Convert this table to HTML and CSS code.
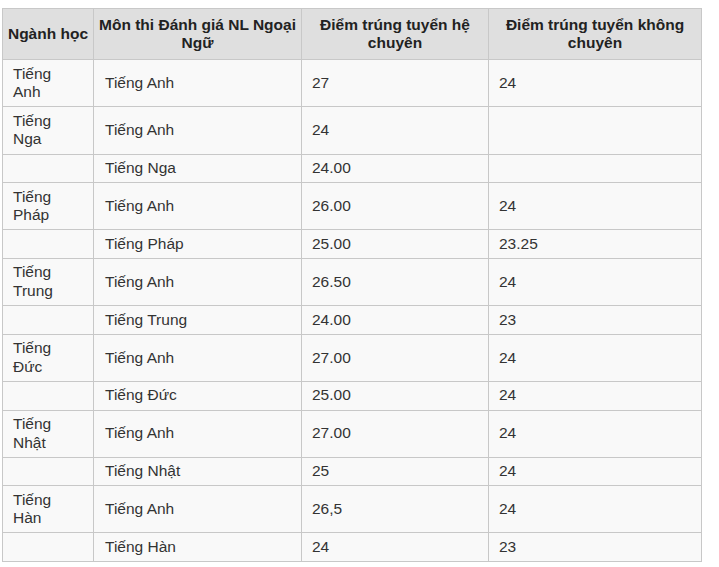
FILE: index.html
```html
<!DOCTYPE html>
<html lang="vi">
<head>
<meta charset="utf-8">
<title>Điểm trúng tuyển</title>
<link rel="stylesheet" href="styles.css">
</head>
<body>
<table class="scores">
  <colgroup>
    <col class="c1"><col class="c2"><col class="c3"><col class="c4">
  </colgroup>
  <thead>
    <tr>
      <th>Ngành học</th>
      <th>Môn thi Đánh giá NL Ngoại<br>Ngữ</th>
      <th>Điểm trúng tuyển hệ<br>chuyên</th>
      <th>Điểm trúng tuyển không<br>chuyên</th>
    </tr>
  </thead>
  <tbody>
    <tr class="tall"><td>Tiếng<br>Anh</td><td>Tiếng Anh</td><td>27</td><td>24</td></tr>
    <tr class="tall"><td>Tiếng<br>Nga</td><td>Tiếng Anh</td><td>24</td><td></td></tr>
    <tr><td></td><td>Tiếng Nga</td><td>24.00</td><td></td></tr>
    <tr class="tall"><td>Tiếng<br>Pháp</td><td>Tiếng Anh</td><td>26.00</td><td>24</td></tr>
    <tr><td></td><td>Tiếng Pháp</td><td>25.00</td><td>23.25</td></tr>
    <tr class="tall"><td>Tiếng<br>Trung</td><td>Tiếng Anh</td><td>26.50</td><td>24</td></tr>
    <tr><td></td><td>Tiếng Trung</td><td>24.00</td><td>23</td></tr>
    <tr class="tall"><td>Tiếng<br>Đức</td><td>Tiếng Anh</td><td>27.00</td><td>24</td></tr>
    <tr><td></td><td>Tiếng Đức</td><td>25.00</td><td>24</td></tr>
    <tr class="tall"><td>Tiếng<br>Nhật</td><td>Tiếng Anh</td><td>27.00</td><td>24</td></tr>
    <tr><td></td><td>Tiếng Nhật</td><td>25</td><td>24</td></tr>
    <tr class="tall"><td>Tiếng<br>Hàn</td><td>Tiếng Anh</td><td>26,5</td><td>24</td></tr>
    <tr><td></td><td>Tiếng Hàn</td><td>24</td><td>23</td></tr>
  </tbody>
</table>
</body>
</html>
```

FILE: styles.css
```css
html, body {
  margin: 0;
  padding: 0;
  background: #ffffff;
}

body {
  padding: 8px 0 0 2px;
  font-family: "Liberation Sans", Arial, sans-serif;
  font-size: 15.5px;
}

.scores {
  border-collapse: collapse;
  table-layout: fixed;
  width: 699px;
  background: #f9f9f9;
  color: #333333;
}

.c1 { width: 91px; }
.c2 { width: 208px; }
.c3 { width: 187px; }
.c4 { width: 213px; }

.scores th,
.scores td {
  border: 1px solid #c8c8c8;
  line-height: 18.6px;
  vertical-align: middle;
}

.scores th {
  background: #dfdfdf;
  color: #222222;
  font-weight: bold;
  text-align: center;
  padding: 6.5px 4px;
}

.scores td {
  text-align: left;
  padding: 4.5px 10px;
}

.scores td:nth-child(2) {
  padding-left: 11px;
}
```
